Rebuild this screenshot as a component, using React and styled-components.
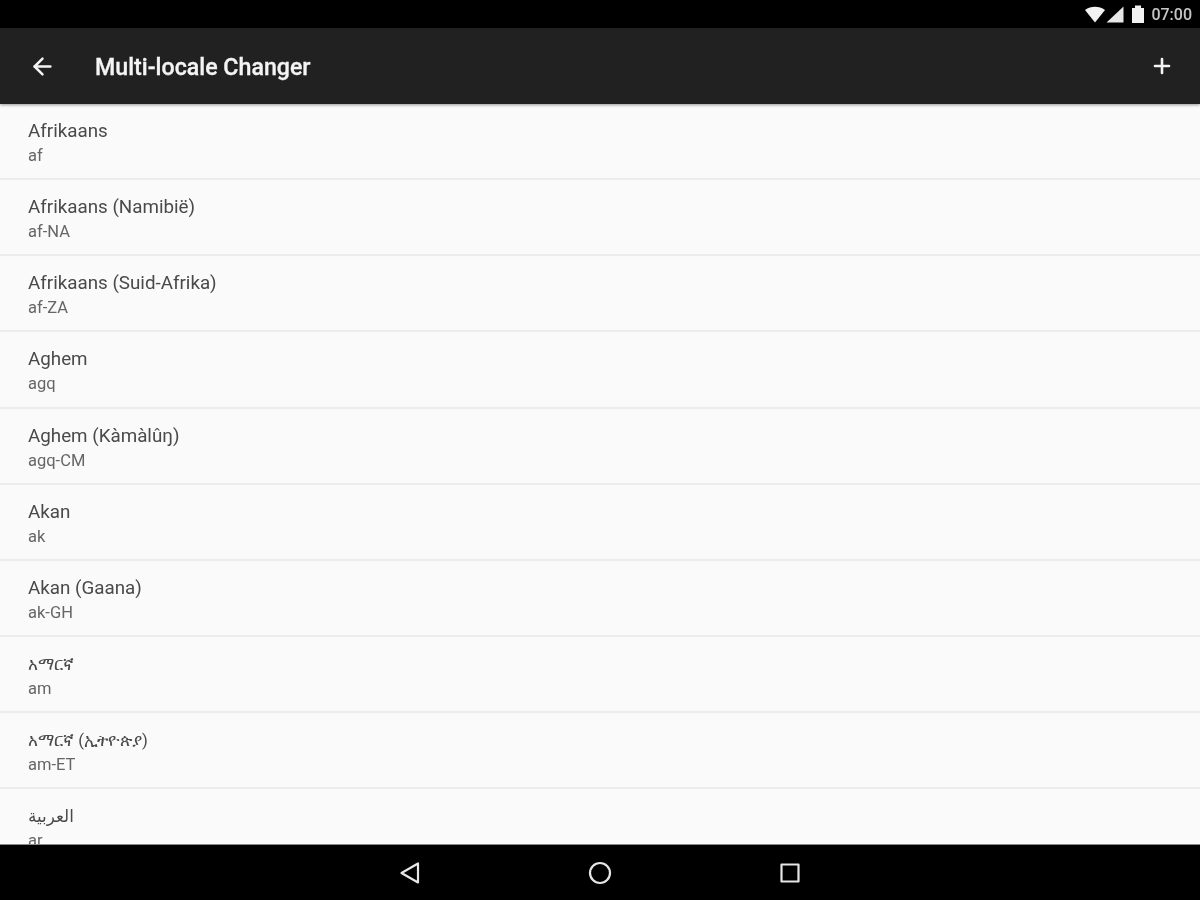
import styled, { createGlobalStyle } from "styled-components";
import { ArrowLeft, Plus } from "lucide-react";

const GlobalStyle = createGlobalStyle`
  html, body { margin: 0; padding: 0; background: #000; }
  * { box-sizing: border-box; }
  body { font-family: Roboto, "Noto Sans", "DejaVu Sans", sans-serif; }
`;

const Screen = styled.div`
  width: 1200px;
  height: 900px;
  display: flex;
  flex-direction: column;
  overflow: hidden;
  background: #fafafa;
  filter: blur(0.45px);
`;

const StatusBar = styled.div`
  height: 28px;
  flex: none;
  background: #000;
  display: flex;
  align-items: center;
  justify-content: flex-end;
  padding-right: 8px;
  color: #e8e8e8;
`;

const Battery = styled.svg`
  margin-left: 8px;
`;

const Clock = styled.span`
  font-size: 16px;
  font-weight: 500;
  margin-left: 7px;
  opacity: 0.85;
`;

const AppBar = styled.header`
  height: 76px;
  flex: none;
  background: #212121;
  display: flex;
  align-items: center;
  padding: 0 26px 0 29px;
  color: #f4f4f4;
  box-shadow: 0 1px 3px rgba(0, 0, 0, 0.4);
  position: relative;
`;

const Title = styled.h1`
  margin: 2px 0 0 39px;
  flex: 1;
  font-size: 23.2px;
  font-weight: 500;
  -webkit-text-stroke: 0.3px #f4f4f4;
`;

const List = styled.ul`
  flex: 1;
  margin: 0;
  padding: 0;
  list-style: none;
  overflow: hidden;
  min-height: 0;
`;

const Row = styled.li`
  height: 76.15px;
  padding: 16px 28px 0;
  border-bottom: 2px solid #ececec;
`;

const Name = styled.div`
  font-size: ${({ $compact }) => ($compact ? "16.8px" : "18.8px")};
  line-height: 23px;
  color: #4a4a4a;
`;

const Code = styled.div`
  font-size: 16.5px;
  line-height: 25px;
  color: #666;
`;

const NavBar = styled.nav`
  height: 56px;
  flex: none;
  background: #000;
  display: flex;
  align-items: center;
  justify-content: center;
  gap: 164px;
  border-top: 1px solid #888;
`;

const NavIcon = styled.svg`
  width: 26px;
  height: 26px;
  fill: none;
  stroke: #e6e6e6;
  stroke-width: 2.2;
  stroke-linejoin: round;
`;

const locales = [
  ["Afrikaans", "af"],
  ["Afrikaans (Namibië)", "af-NA"],
  ["Afrikaans (Suid-Afrika)", "af-ZA"],
  ["Aghem", "agq"],
  ["Aghem (Kàmàlûŋ)", "agq-CM"],
  ["Akan", "ak"],
  ["Akan (Gaana)", "ak-GH"],
  ["አማርኛ", "am", true],
  ["አማርኛ (ኢትዮጵያ)", "am-ET", true],
  ["العربية", "ar", true],
];

export default function App() {
  return (
    <>
      <GlobalStyle />
      <Screen>
        <StatusBar>
          <svg width="22" height="17" viewBox="0 0 22 17">
            <path d="M1 4C4 1.800 7.500 .8 11 .8s7 1 10 3.200L11 16.500z" fill="#f2f2f2" />
          </svg>
          <svg width="18" height="17" viewBox="0 0 18 17">
            <path d="M17.500 .5v16H.5z" fill="#e8e8e8" />
          </svg>
          <Battery width="12" height="18" viewBox="0 0 12 18">
            <path d="M0 3h3V.5h6V3h3v15H0z" fill="#f2f2f2" />
          </Battery>
          <Clock>07:00</Clock>
        </StatusBar>
        <AppBar>
          <ArrowLeft size={27} strokeWidth={2.2} />
          <Title>Multi-locale Changer</Title>
          <Plus size={24} strokeWidth={2.6} />
        </AppBar>
        <List>
          {locales.map(([name, code, compact]) => (
            <Row key={code}>
              <Name $compact={compact}>{name}</Name>
              <Code>{code}</Code>
            </Row>
          ))}
        </List>
        <NavBar>
          <NavIcon viewBox="0 0 26 26">
            <path d="M21 3.500v19L4.500 13z" />
          </NavIcon>
          <NavIcon viewBox="0 0 26 26">
            <circle cx="13" cy="13" r="10" />
          </NavIcon>
          <NavIcon viewBox="0 0 26 26">
            <path d="M4.500 4.500h17v17h-17z" />
          </NavIcon>
        </NavBar>
      </Screen>
    </>
  );
}
